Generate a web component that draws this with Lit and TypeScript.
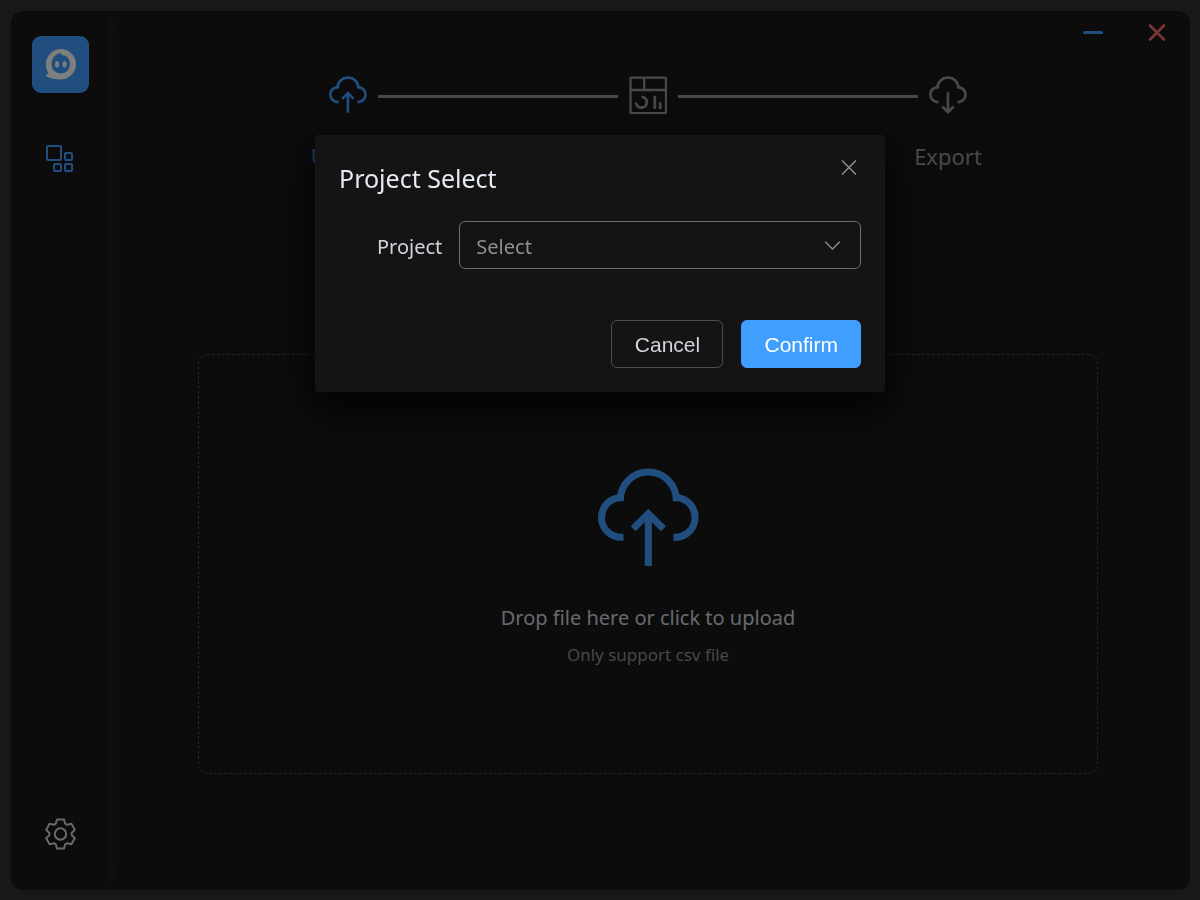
import { LitElement, html, css, svg } from "lit";
import { customElement, state } from "lit/decorators.js";

@customElement("cloud-icon")
export class CloudIcon extends LitElement {
  static properties = { down: { type: Boolean } };
  declare down: boolean;

  static styles = css`
    :host { display: block; }
    svg { display: block; width: 100%; fill: none; stroke: currentColor; stroke-width: 7; }
  `;

  render() {
    return html`<svg viewBox="0 0 101 102" aria-hidden="true">
      <path d="M25.500 69.300H23.400A19.900 19.900 0 0 1 23.400 29.500H25.500M75.500 69.300H77.200A19.900 19.900 0 0 0 77.200 29.500H75.500" />
      <path d="M22.300 33.200V32A28 28 0 0 1 78.300 32V33.200" />
      ${this.down
        ? svg`<path d="M50.300 43.500V96M35.200 81L50.300 96.100L65.400 81" />`
        : svg`<path d="M50.300 98V46M35.200 60.700L50.300 45.600L65.400 60.700" />`}
    </svg>`;
  }
}

@customElement("app-root")
export class AppRoot extends LitElement {
  @state() private open = true;

  static styles = css`
    :host {
      display: block;
      font-family: "Segoe UI", "Noto Sans", sans-serif;
      font-size: 20px;
      color: #e5eaf3;
    }
    *, *::before, *::after { box-sizing: border-box; }
    button { font: inherit; color: inherit; background: none; border: 0; padding: 0; cursor: pointer; }
    svg { display: block; fill: none; stroke: currentColor; }
    .desktop { display: flex; min-height: 100vh; padding: 11px 10px 10px 11px; background: #303030; }
    .window { flex: 1; display: flex; border-radius: 12px; background: #181818; overflow: hidden; }
    .side {
      width: 97px;
      display: flex;
      flex-direction: column;
      align-items: center;
      padding: 25px 0 40px 2px;
      color: #409eff;
    }
    .logo { width: 57px; height: 57px; border-radius: 9px; background: #409eff; color: #fff; }
    .nav { margin-top: 51px; }
    .settings { margin-top: auto; color: #cfd3dc; }
    .edge { width: 13px; margin: 2px 0; border-left: 1px solid #1f1f1f; border-radius: 0 100% 100% 0 / 0 60px 60px 0; background: #1c1c1c; }
    .main { flex: 1; display: flex; flex-direction: column; }
    .bar { display: flex; justify-content: flex-end; gap: 42px; padding: 11px 22px 0 0; }
    .minimize { color: #409eff; }
    .close { color: #f56c6c; }
    .steps {
      display: grid;
      grid-template-columns: repeat(3, 1fr);
      padding: 0 92px 0 77px;
      margin: 32px 0 0;
      list-style: none;
      color: #909399;
    }
    .step { display: flex; flex-direction: column; align-items: center; gap: 26px; position: relative; }
    .step.active { color: #409eff; }
    .step + .step::before {
      content: "";
      position: absolute;
      top: 19px;
      left: calc(-50% + 30px);
      right: calc(50% + 30px);
      height: 3px;
      background: #909399;
    }
    .glyph { height: 38px; width: 38px; }
    .label { line-height: 32px; font-size: 22px; }
    .drop {
      flex: 1;
      margin: 182px 92px 116px 77px;
      padding-top: 8px;
      border: 1px dashed #4c4d4f;
      border-radius: 9px;
      display: flex;
      flex-direction: column;
      align-items: center;
      justify-content: center;
      color: #cfd3dc;
      font-size: 20px;
    }
    .drop cloud-icon { width: 101px; color: #409eff; }
    .hint { margin-top: 32px; line-height: 32px; }
    .note { margin-top: 7px; line-height: 28px; font-size: 17px; color: #8d9095; }
    .overlay { position: fixed; inset: 0; padding: 15vh 24px 0; background: rgba(0, 0, 0, 0.5); }
    .dialog {
      width: 100%;
      max-width: 570px;
      margin: 0 auto;
      padding: 24px;
      border-radius: 3px;
      background: #141414;
      box-shadow: 0 18px 48px 6px rgba(0, 0, 0, 0.36), 0 12px 30px rgba(0, 0, 0, 0.72);
    }
    .head { display: flex; justify-content: space-between; align-items: flex-start; }
    h2 { margin: 0; font-size: 25px; font-weight: 400; line-height: 38px; }
    .dismiss { margin-right: 4px; color: #909399; }
    .field { display: flex; align-items: center; gap: 17px; margin-top: 24px; padding-left: 38px; color: #cfd3dc; }
    .field label { padding-top: 2px; }
    select {
      flex: 1;
      height: 48px;
      padding: 2px 16px 0;
      border: 1px solid #6c6e72;
      border-radius: 6px;
      appearance: none;
      font: inherit;
      color: #8d9095;
      background: transparent;
    }
    .pick { flex: 1; display: grid; align-items: center; }
    .pick > * { grid-area: 1 / 1; }
    .pick svg { justify-self: end; margin-right: 19px; color: #8d9095; pointer-events: none; }
    .foot { display: flex; justify-content: flex-end; gap: 18px; margin-top: 51px; }
    .btn {
      height: 48px;
      min-width: 112px;
      padding: 2px 22px 0;
      border: 1px solid #4c4d4f;
      border-radius: 6px;
      font: 21px "Liberation Sans", Arial, sans-serif;
      color: #cfd3dc;
    }
    .btn.primary { border-color: #409eff; background: #409eff; color: #fff; }
  `;

  private hide() {
    this.open = false;
  }

  render() {
    return html`
      <div class="desktop">
        <div class="window">
          <nav class="side">
            <div class="logo">
              <svg viewBox="0 0 57 57" stroke="none">
                <path fill="currentColor" fill-rule="evenodd" d="M29 13.500C37.200 13.500 43.500 20 43.500 28C43.500 36.500 37 43 28.500 43C23 43 18.500 42 14 39.600L17.300 37.600C15.400 35 14.300 31.800 14.300 28.200C14.300 20 20.700 13.500 29 13.500ZM30.300 18.800C29.300 18.200 29 17.200 29.200 16.200C23 17.400 18.900 22.400 18.900 28.200A9.800 9.800 0 0 0 38.500 28.200C38.500 24 36.200 20.600 33 19.200C32 18.700 31 19.300 30.300 18.800Z" />
                <rect fill="currentColor" x="23.600" y="25.600" width="3" height="5.400" rx="1.500" />
                <rect fill="currentColor" x="31" y="25.600" width="3" height="5.400" rx="1.500" />
              </svg>
            </div>
            <button class="nav" aria-label="Projects">
              <svg width="29" height="30" viewBox="1 0 29 30" stroke-width="2">
                <rect x="2" y="2" width="14" height="14" rx="1" />
                <rect x="20" y="9" width="7" height="7" rx="1" />
                <rect x="9" y="20" width="7" height="7" rx="1" />
                <rect x="20" y="20" width="7" height="7" rx="1" />
              </svg>
            </button>
            <button class="settings" aria-label="Settings">
              <svg width="32" height="32" viewBox="-15.500 -16 32 32" stroke-width="2" stroke-linejoin="round">
                <path d="M-3.500 -14.500H3.500L4.700 -10.300L6.600 -9.200L10.900 -10.300L14.300 -4.300L11.200 -1.100V1.100L14.300 4.300L10.900 10.300L6.600 9.200L4.700 10.300L3.500 14.500H-3.500L-4.700 10.300L-6.600 9.200L-10.900 10.300L-14.300 4.300L-11.200 1.100V-1.100L-14.300 -4.300L-10.900 -10.300L-6.600 -9.200L-4.700 -10.300Z" />
                <circle r="5.700" />
              </svg>
            </button>
          </nav>
          <div class="edge"></div>
          <main class="main">
            <div class="bar">
              <button class="minimize" aria-label="Minimize">
                <svg width="22" height="22" viewBox="0 0 22 22" stroke-width="3" stroke-linecap="round"><path d="M2.500 10.500H19.500" /></svg>
              </button>
              <button class="close" aria-label="Close window">
                <svg width="22" height="22" viewBox="0 0 22 22" stroke-width="2.600" stroke-linecap="round"><path d="M4 3.500L18 17.500M18 3.500L4 17.500" /></svg>
              </button>
            </div>
            <ol class="steps">
              <li class="step active">
                <cloud-icon class="glyph"></cloud-icon>
                <span class="label">Upload</span>
              </li>
              <li class="step">
                <svg class="glyph" viewBox="0 0 38 38" stroke-width="2.300">
                  <rect x="1.500" y="1.700" width="35.500" height="35.500" rx="1" />
                  <path d="M1.500 14H37M15.200 1.700V14" />
                  <path stroke-width="2.700" d="M12.600 20.800A5.400 5.400 0 1 1 7 26.600M25.800 19.700V33M31.200 26.200V33" />
                </svg>
                <span class="label">Design</span>
              </li>
              <li class="step">
                <cloud-icon class="glyph" down></cloud-icon>
                <span class="label">Export</span>
              </li>
            </ol>
            <button class="drop">
              <cloud-icon></cloud-icon>
              <span class="hint">Drop file here or click to upload</span>
              <span class="note">Only support csv file</span>
            </button>
          </main>
        </div>
      </div>
      ${this.open
        ? html`<div class="overlay">
            <section class="dialog" role="dialog" aria-modal="true" aria-labelledby="title">
              <header class="head">
                <h2 id="title">Project Select</h2>
                <button class="dismiss" aria-label="Close" @click=${this.hide}>
                  <svg width="16" height="16" viewBox="0 0 16 16" stroke-width="1.400"><path d="M1 1.500L15 15.500M15 1.500L1 15.500" /></svg>
                </button>
              </header>
              <div class="field">
                <label for="project">Project</label>
                <div class="pick">
                  <select id="project"><option>Select</option></select>
                  <svg width="18" height="12" viewBox="0 0 18 12" stroke-width="1.300"><path d="M1.200 2.800L8.500 10L15.800 2.800" /></svg>
                </div>
              </div>
              <footer class="foot">
                <button class="btn" @click=${this.hide}>Cancel</button>
                <button class="btn primary" @click=${this.hide}>Confirm</button>
              </footer>
            </section>
          </div>`
        : null}
    `;
  }
}
